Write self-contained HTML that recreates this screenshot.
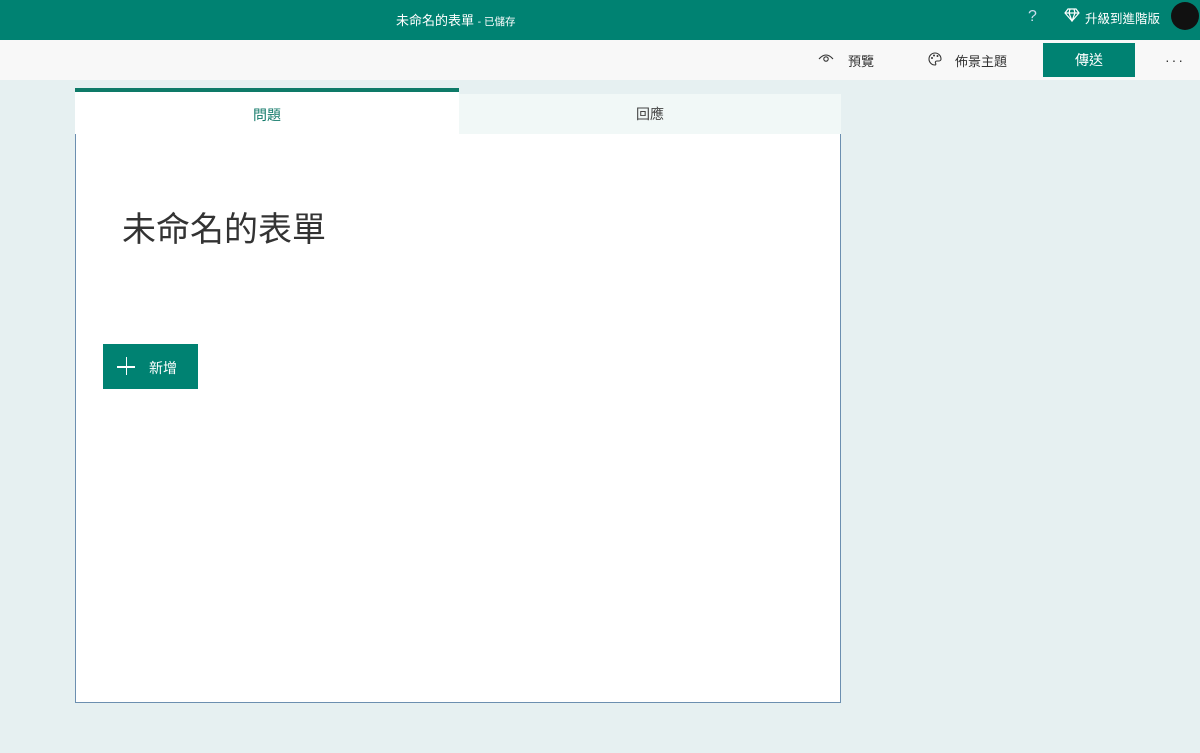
<!DOCTYPE html>
<html><head><meta charset="utf-8"><style>
*{margin:0;padding:0;box-sizing:border-box}
body{width:1200px;height:753px;background:#e6f0f1;font-family:"Liberation Sans","Noto Sans CJK TC",sans-serif;position:relative;overflow:hidden}
.top{position:absolute;left:0;top:0;width:1200px;height:40px;background:#008272;color:#fff}
.bar{position:absolute;left:0;top:40px;width:1200px;height:40px;background:#f8f8f8}
.abs{position:absolute}
</style></head><body>
<div class="top">
<div class="abs" style="left:396px;top:10px;font-size:13px">未命名的表單 <span style="font-size:10.5px">- 已儲存</span></div>
<div class="abs" style="left:1028px;top:8px;font-size:16px;color:#cde">?</div>
<svg class="abs" style="left:1064px;top:8px" width="16" height="14" viewBox="0 0 16 14"><path d="M4 1h8l3 4-7 8-7-8z M1 5h14 M6 1 5 5l3 8 3-8-1-4" fill="none" stroke="#fff" stroke-width="1.2"/></svg>
<div class="abs" style="left:1085px;top:8px;font-size:12.5px">升級到進階版</div>
<div class="abs" style="left:1171px;top:2px;width:28px;height:28px;border-radius:50%;background:#111"></div>
</div>
<div class="bar">
<svg class="abs" style="left:818px;top:12px" width="16" height="12" viewBox="0 0 16 12"><path d="M1 7Q8-1 15 7" fill="none" stroke="#333" stroke-width="1.1"/><circle cx="8" cy="7" r="2.2" fill="none" stroke="#333" stroke-width="1.1"/></svg>
<div class="abs" style="left:848px;top:11px;font-size:13px;color:#333">預覽</div>
<svg class="abs" style="left:927px;top:11px" width="16" height="16" viewBox="0 0 16 16"><path d="M8 2a6 6 0 1 0 0 12c1 0 1-1 .5-2s0-2 1.5-2h2a2 2 0 0 0 2-2A6 6 0 0 0 8 2z" fill="none" stroke="#333" stroke-width="1.1"/><circle cx="5" cy="7" r="1" fill="#333"/><circle cx="7" cy="4.5" r="1" fill="#333"/><circle cx="10.5" cy="5" r="1" fill="#333"/></svg>
<div class="abs" style="left:955px;top:11px;font-size:13px;color:#333">佈景主題</div>
<div class="abs" style="left:1043px;top:3px;width:92px;height:34px;background:#008272;color:#fff;font-size:14px;text-align:center;line-height:34px">傳送</div>
<div class="abs" style="left:1165px;top:12px;font-size:14px;color:#333;letter-spacing:2px">···</div>
</div>
<div class="abs" style="left:75px;top:88px;width:384px;height:46px;background:#fff;border-top:4px solid #0e7a68"></div>
<div class="abs" style="left:75px;top:105px;width:384px;text-align:center;font-size:14px;color:#137a6a">問題</div>
<div class="abs" style="left:459px;top:94px;width:382px;height:40px;background:#f1f8f7;text-align:center;line-height:40px;font-size:14px;color:#444">回應</div>
<div class="abs" style="left:75px;top:134px;width:766px;height:569px;background:#fff;border-left:1px solid #6c8fb0;border-right:1px solid #6c8fb0;border-bottom:1px solid #6c8fb0"></div>
<div class="abs" style="left:122px;top:202px;font-size:34px;color:#333">未命名的表單</div>
<div class="abs" style="left:103px;top:344px;width:95px;height:45px;background:#008272;color:#fff">
<div class="abs" style="left:14px;top:22px;width:18px;height:1.5px;background:#fff"></div>
<div class="abs" style="left:22.5px;top:13px;width:1.5px;height:18px;background:#fff"></div>
<div class="abs" style="left:46px;top:14px;font-size:14px">新增</div>
</div>
</body></html>
